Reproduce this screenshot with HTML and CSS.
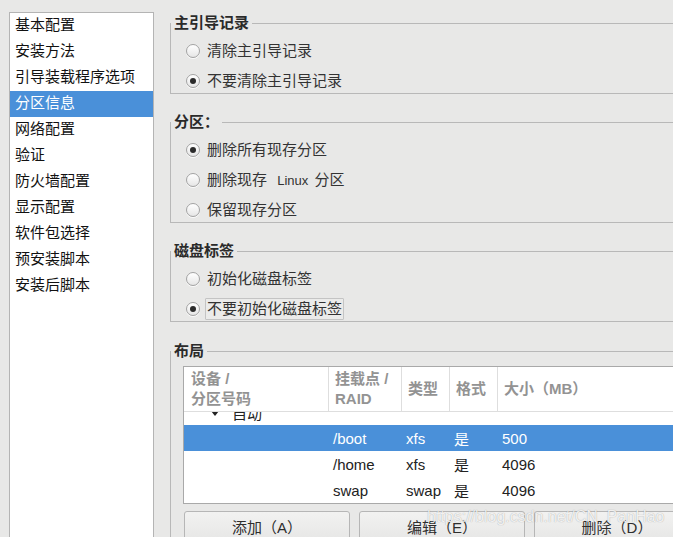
FILE: index.html
```html
<!DOCTYPE html>
<html lang="zh-CN">
<head>
<meta charset="utf-8">
<title>分区信息</title>
<link rel="stylesheet" href="styles.css">
</head>
<body>
<div class="app">
  <ul class="sidebar">
    <li>基本配置</li>
    <li>安装方法</li>
    <li>引导装载程序选项</li>
    <li class="selected">分区信息</li>
    <li>网络配置</li>
    <li>验证</li>
    <li>防火墙配置</li>
    <li>显示配置</li>
    <li>软件包选择</li>
    <li>预安装脚本</li>
    <li>安装后脚本</li>
  </ul>
  <main class="main">
    <fieldset class="group">
      <legend>主引导记录</legend>
      <div class="options">
        <label class="opt"><span class="radio"></span><span class="txt">清除主引导记录</span></label>
        <label class="opt"><span class="radio checked"></span><span class="txt">不要清除主引导记录</span></label>
      </div>
    </fieldset>
    <fieldset class="group">
      <legend>分区：</legend>
      <div class="options">
        <label class="opt"><span class="radio checked"></span><span class="txt">删除所有现存分区</span></label>
        <label class="opt"><span class="radio"></span><span class="txt">删除现存 <span class="latin">Linux</span> 分区</span></label>
        <label class="opt"><span class="radio"></span><span class="txt">保留现存分区</span></label>
      </div>
    </fieldset>
    <fieldset class="group">
      <legend>磁盘标签</legend>
      <div class="options">
        <label class="opt"><span class="radio"></span><span class="txt">初始化磁盘标签</span></label>
        <label class="opt"><span class="radio checked"></span><span class="txt focus">不要初始化磁盘标签</span></label>
      </div>
    </fieldset>
    <fieldset class="group layout">
      <legend>布局</legend>
      <div class="layout-body">
        <div class="table">
          <div class="thead">
            <div class="th first">设备 /<br>分区号码</div>
            <div class="th">挂载点 /<br>RAID</div>
            <div class="th">类型</div>
            <div class="th">格式</div>
            <div class="th">大小（MB）</div>
          </div>
          <div class="tbody">
            <div class="rows">
              <div class="tr"><div class="td tree"><svg class="tri" width="8" height="5" viewBox="0 0 8 5"><path d="M0 0H8L4 5Z" fill="#222"/></svg><span>自动</span></div><div class="td"></div><div class="td"></div><div class="td"></div><div class="td"></div></div>
              <div class="tr sel"><div class="td"></div><div class="td">/boot</div><div class="td">xfs</div><div class="td">是</div><div class="td">500</div></div>
              <div class="tr"><div class="td"></div><div class="td">/home</div><div class="td">xfs</div><div class="td">是</div><div class="td">4096</div></div>
              <div class="tr"><div class="td"></div><div class="td">swap</div><div class="td">swap</div><div class="td">是</div><div class="td">4096</div></div>
            </div>
          </div>
        </div>
        <div class="buttons">
          <button class="btn">添加（A）</button>
          <button class="btn">编辑（E）</button>
          <button class="btn">删除（D）</button>
        </div>
      </div>
    </fieldset>
  </main>
  <div class="watermark">https://blog.csdn.net/CN_PanHao</div>
</div>
</body>
</html>
```

FILE: styles.css
```css
* { box-sizing: border-box; }
html, body { margin: 0; padding: 0; }
body {
  background: #e8e8e7;
  font-family: "Liberation Sans", "Noto Sans CJK SC", sans-serif;
  font-size: 15px;
  color: #2e2e2e;
}
.app {
  position: relative;
  display: flex;
  height: 537px;
  width: 673px;
  overflow: hidden;
}
.sidebar {
  list-style: none;
  margin: 12px 0 0 9px;
  padding: 0;
  flex: none;
  width: 145px;
  height: 600px;
  background: #fff;
  border: 1px solid #b4b4b4;
  border-bottom: none;
}
.sidebar li {
  height: 26px;
  line-height: 24px;
  padding-left: 5px;
  color: #111;
  white-space: nowrap;
}
.sidebar li.selected {
  background: #4a90d9;
  color: #fff;
}
.main {
  flex: 1;
  min-width: 0;
  margin-left: 16px;
  padding-top: 13px;
  overflow: hidden;
}
.group {
  margin: 0 0 18px 0;
  padding: 0;
  min-width: 0;
  width: 540px;
  border: 1px solid #b8b8b8;
}
.group legend {
  padding: 0 3px;
  margin: 0;
  font-weight: bold;
  font-size: 15px;
  line-height: 20px;
  color: #2a2a2a;
}
.options {
  display: flex;
  flex-direction: column;
  gap: 6px;
  padding: 6px 0 0 15px;
}
.opt {
  display: flex;
  align-items: center;
  height: 24px;
  color: #333;
}
.radio {
  position: relative;
  flex: none;
  width: 14px;
  height: 14px;
  border-radius: 50%;
  border: 1px solid #a3a3a3;
  background: linear-gradient(#ffffff, #e6e6e6);
  box-shadow: 0 1px 0 rgba(255,255,255,0.8);
}
.radio.checked::after {
  content: "";
  position: absolute;
  left: 3px;
  top: 3px;
  width: 6px;
  height: 6px;
  border-radius: 50%;
  background: #2b2b2b;
}
.txt {
  margin-left: 7px;
  line-height: 20px;
  white-space: nowrap;
}
.txt.focus {
  margin-left: 5px;
  padding: 0 1px;
  border: 1px solid #c4c4c4;
  border-radius: 1px;
  background: #ebebea;
}
.latin {
  font-size: 13px;
  margin: 0 2px 0 6px;
}
.group.layout {
  margin-top: 19px;
  height: 300px;
}
.layout-body {
  padding: 5px 0 0 12px;
}
.table {
  background: #fff;
  border: 1px solid #a9a9a9;
}
.thead, .tr {
  display: grid;
  grid-template-columns: 144px 73px 48px 48px 1fr;
}
.thead {
  height: 45px;
  border-bottom: 1px solid #dedede;
}
.th {
  display: flex;
  align-items: center;
  padding-left: 6px;
  border-left: 1px solid #dedede;
  color: #939393;
  font-weight: bold;
  font-size: 15px;
  line-height: 20px;
  white-space: nowrap;
}
.th.first {
  border-left: none;
  padding-left: 7px;
}
.tbody {
  height: 91px;
  overflow: hidden;
}
.rows {
  margin-top: -13px;
}
.tr {
  height: 26px;
  color: #222;
}
.tr.sel {
  background: #4a90d9;
  color: #fff;
}
.td {
  display: flex;
  align-items: center;
  padding-left: 5px;
  white-space: nowrap;
}
.td.tree {
  padding-left: 27px;
}
.tri {
  flex: none;
  margin-top: 2px;
}
.td.tree span {
  margin-left: 13px;
}
.buttons {
  display: flex;
  gap: 9px;
  margin: 7px 0 0 1px;
}
.btn {
  flex: none;
  width: 166px;
  height: 32px;
  padding: 0 0 2px 0;
  border: 1px solid #b6b6b6;
  border-radius: 3px;
  background: linear-gradient(#f2f2f1, #e6e6e5);
  font-family: "Liberation Sans", "Noto Sans CJK SC", sans-serif;
  font-size: 15px;
  color: #2e2e2e;
}
.watermark {
  position: absolute;
  left: 427px;
  top: 508px;
  font-family: "Liberation Sans", sans-serif;
  font-size: 16px;
  color: rgba(255,255,255,0.85);
  text-shadow: 0 0 1px rgba(0,0,0,0.35);
  white-space: nowrap;
  pointer-events: none;
}
```
